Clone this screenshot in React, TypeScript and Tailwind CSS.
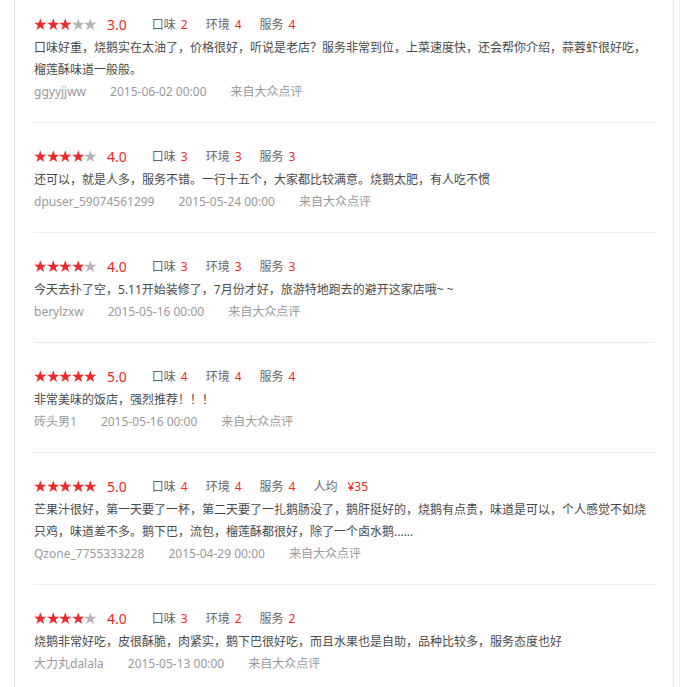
type Review = {
  stars: number;
  score: string;
  taste: number;
  env: number;
  service: number;
  avg?: string;
  text: string;
  user: string;
  date: string;
};

const REVIEWS: Review[] = [
  {
    stars: 3,
    score: "3.0",
    taste: 2,
    env: 4,
    service: 4,
    text: "口味好重，烧鹅实在太油了，价格很好，听说是老店？服务非常到位，上菜速度快，还会帮你介绍，蒜蓉虾很好吃，榴莲酥味道一般般。",
    user: "ggyyjjww",
    date: "2015-06-02 00:00",
  },
  {
    stars: 4,
    score: "4.0",
    taste: 3,
    env: 3,
    service: 3,
    text: "还可以，就是人多，服务不错。一行十五个，大家都比较满意。烧鹅太肥，有人吃不惯",
    user: "dpuser_59074561299",
    date: "2015-05-24 00:00",
  },
  {
    stars: 4,
    score: "4.0",
    taste: 3,
    env: 3,
    service: 3,
    text: "今天去扑了空，5.11开始装修了，7月份才好，旅游特地跑去的避开这家店哦~ ~",
    user: "berylzxw",
    date: "2015-05-16 00:00",
  },
  {
    stars: 5,
    score: "5.0",
    taste: 4,
    env: 4,
    service: 4,
    text: "非常美味的饭店，强烈推荐！！！",
    user: "砖头男1",
    date: "2015-05-16 00:00",
  },
  {
    stars: 5,
    score: "5.0",
    taste: 4,
    env: 4,
    service: 4,
    avg: "¥35",
    text: "芒果汁很好，第一天要了一杯，第二天要了一扎鹅肠没了，鹅肝挺好的，烧鹅有点贵，味道是可以，个人感觉不如烧只鸡，味道差不多。鹅下巴，流包，榴莲酥都很好，除了一个卤水鹅......",
    user: "Qzone_7755333228",
    date: "2015-04-29 00:00",
  },
  {
    stars: 4,
    score: "4.0",
    taste: 3,
    env: 2,
    service: 2,
    text: "烧鹅非常好吃，皮很酥脆，肉紧实，鹅下巴很好吃，而且水果也是自助，品种比较多，服务态度也好",
    user: "大力丸dalala",
    date: "2015-05-13 00:00",
  },
];

const STAR_POINTS =
  "6,0.2 7.44,4.42 11.9,4.48 8.33,7.16 9.64,11.42 6,8.85 2.36,11.42 3.67,7.16 0.1,4.48 4.56,4.42";

function Stars({ count }: { count: number }) {
  return (
    <div className="flex">
      {[0, 1, 2, 3, 4].map((i) => (
        <svg key={i} viewBox="0 0 12 12" className="w-[12.6px] h-[12.6px]">
          <polygon points={STAR_POINTS} fill={i < count ? "#ec2a2a" : "#b3b3b3"} />
        </svg>
      ))}
    </div>
  );
}

function Score({ label, value, wide }: { label: string; value: string | number; wide?: boolean }) {
  return (
    <span className="flex items-center">
      <span className="text-[#666]">{label}</span>
      <span className={wide ? "ml-[10px] text-[#ec2a2a]" : "ml-[5px] text-[#ec2a2a]"}>{value}</span>
    </span>
  );
}

function ReviewItem({ review }: { review: Review }) {
  return (
    <div className="border-b border-[#ececec] pt-[21px] pb-[19px] first:pt-[12px]">
      {/* rating row */}
      <div className="flex items-center h-[25px] text-[12px]">
        <Stars count={review.stars} />
        <span className="ml-[10px] text-[14px] text-[#ec2a2a]">{review.score}</span>
        <div className="ml-[25px] flex items-center gap-[18px]">
          <Score label="口味" value={review.taste} />
          <Score label="环境" value={review.env} />
          <Score label="服务" value={review.service} />
          {review.avg && <Score label="人均" value={review.avg} wide />}
        </div>
      </div>

      {/* body */}
      <p className="text-[12px] leading-[22px] text-[#4a4a4a]">{review.text}</p>

      {/* meta */}
      <div className="flex gap-[24px] text-[12px] leading-[22px] text-[#999]">
        <span>{review.user}</span>
        <span>{review.date}</span>
        <span>来自大众点评</span>
      </div>
    </div>
  );
}

export default function App() {
  return (
    <div className="min-h-screen bg-white font-['Noto_Sans','Noto_Sans_CJK_SC',sans-serif]">
      <div className="ml-[14px] w-[660px] min-h-screen border-x border-[#e3e3e3] pl-[19px] pr-[18px] shadow-[5px_0_0_#fff,6px_0_0_#f2f2f2]">
        {REVIEWS.map((r, i) => (
          <ReviewItem key={i} review={r} />
        ))}
      </div>
    </div>
  );
}
